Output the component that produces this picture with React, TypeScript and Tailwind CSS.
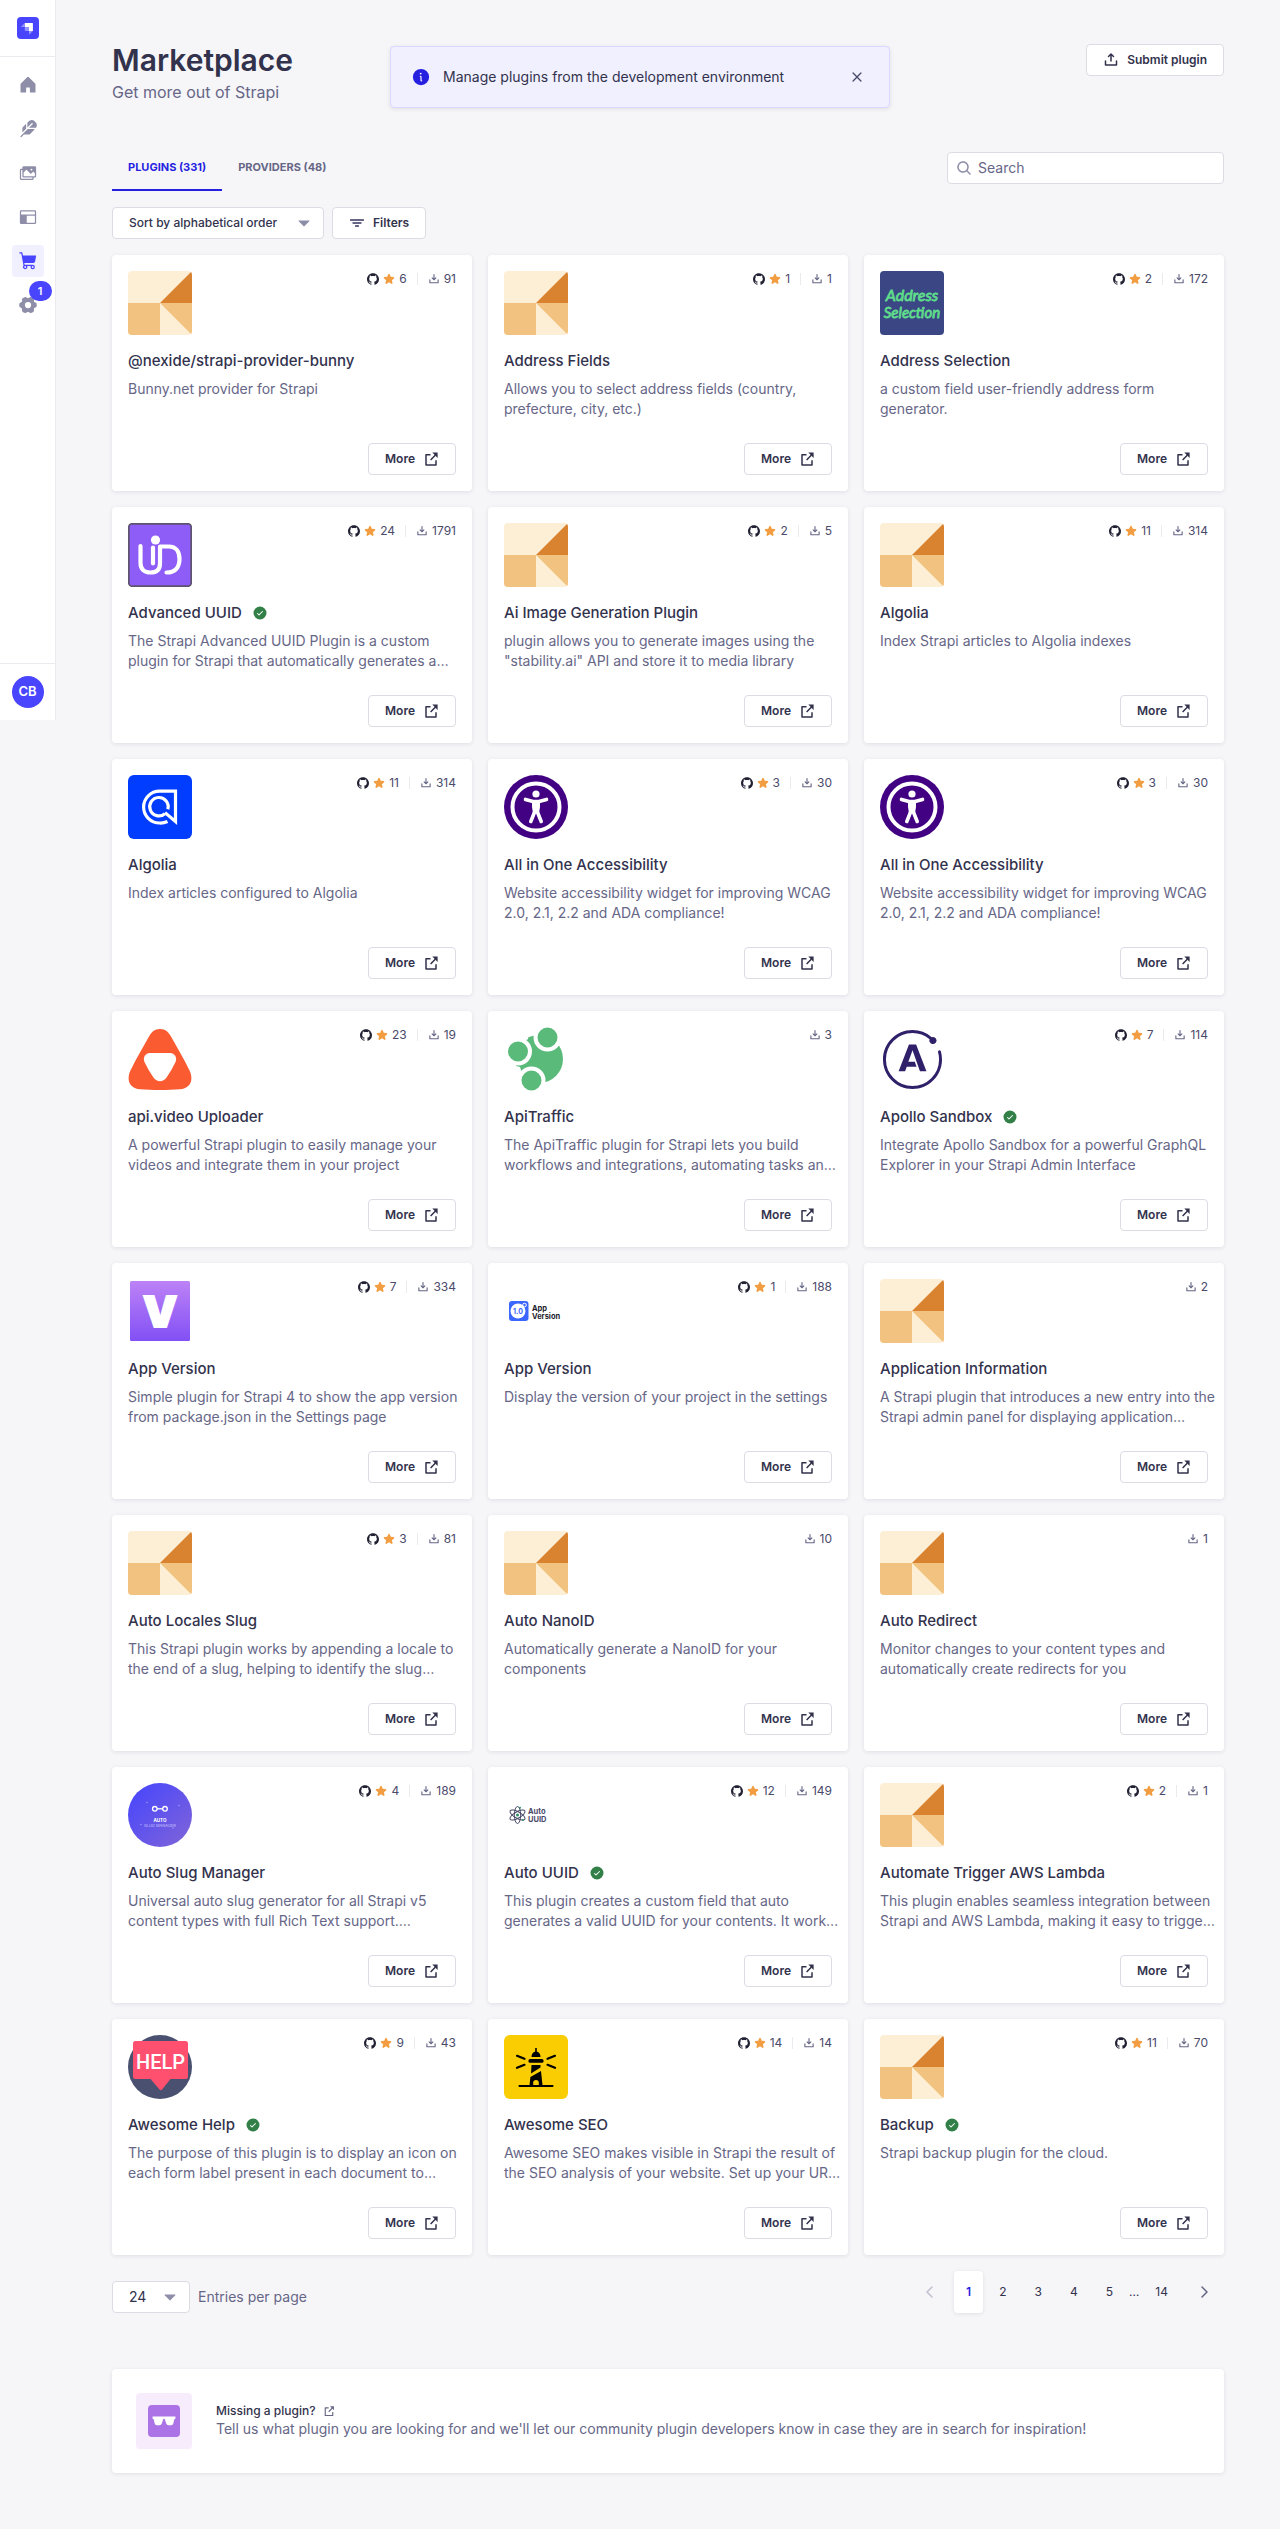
import type { ReactNode } from "react";
import {
  PiCaretDownFill,
  PiCaretLeftBold,
  PiCaretRightBold,
  PiCheckCircleFill,
  PiDownloadSimpleBold,
  PiFeatherFill,
  PiGearSixFill,
  PiHouseFill,
  PiImagesFill,
  PiInfoFill,
  PiLayoutFill,
  PiMagnifyingGlassBold,
  PiShoppingCartFill,
  PiStarFill,
  PiUploadSimpleBold,
  PiXBold,
} from "react-icons/pi";
import { SiApollographql, SiGithub } from "react-icons/si";

/* ---------- small icons ---------- */

function ExternalLinkIcon({ className }: { className: string }) {
  return (
    <svg viewBox="0 0 16 16" fill="none" className={className} aria-hidden="true">
      <path d="M7.5 3.8H3V14h10V9.2" stroke="currentColor" strokeWidth="1.5" strokeLinejoin="round" />
      <path d="M7.6 9 13 3.4" stroke="currentColor" strokeWidth="1.5" />
      <path d="M9.3 1.6h5.3v5.3z" fill="currentColor" />
    </svg>
  );
}

function FilterIcon() {
  return (
    <svg viewBox="0 0 16 16" className="size-4 text-[#666687]" fill="currentColor" aria-hidden="true">
      <rect x="1" y="4" width="14" height="2" rx="0.5" />
      <rect x="3.5" y="7" width="9" height="2" rx="0.5" />
      <rect x="6" y="10" width="4" height="2" rx="0.5" />
    </svg>
  );
}

function SunglassesIcon() {
  return (
    <svg viewBox="0 0 24 12" className="w-6 text-white" fill="currentColor" aria-hidden="true">
      <path d="M.6 1.500h22.800v2.200l-1.100.5-1 4.300a2.200 2.200 0 0 1-2.200 1.700h-2.700a2.400 2.400 0 0 1-2.200-1.600L13 4.700a1 1 0 0 0-2 0L9.800 8.600a2.400 2.400 0 0 1-2.200 1.600H4.900a2.200 2.200 0 0 1-2.200-1.700l-1-4.300-1.100-.5z" />
    </svg>
  );
}

function StrapiMark() {
  return (
    <svg viewBox="0 0 22 22" className="size-[22px]" role="img" aria-label="Strapi">
      <rect width="22" height="22" rx="4" fill="#4945FF" />
      <path d="M7.8 6h7.600c.3 0 .5.200.5.500V14h-3.900v-3.600c0-.3-.2-.5-.5-.5H7.800z" fill="#fff" />
      <path d="M7.800 6v3.900H4.400c-.3 0-.4-.3-.2-.5zM12 14h3.900l-3.600 3.600c-.1.100-.3 0-.3-.1z" fill="#9593FF" />
      <path d="M7.800 9.900h3.700c.3 0 .5.200.5.500V14H8.300c-.3 0-.5-.2-.5-.5z" fill="#9593FF" />
    </svg>
  );
}

/* ---------- plugin logos ---------- */

function DefaultLogo() {
  return (
    <svg viewBox="0 0 64 64" className="size-16 rounded" aria-hidden="true">
      <rect width="64" height="64" fill="#FDEFD5" />
      <rect y="32" width="32" height="32" fill="#F2C380" />
      <path d="M32 32 64 0v32z" fill="#D9822F" />
      <path d="M32 32h32v32z" fill="#F2C380" />
    </svg>
  );
}

function AddressLogo() {
  return (
    <svg viewBox="0 0 64 64" className="size-16 rounded" aria-hidden="true">
      <rect width="64" height="64" fill="#3B4785" />
      <g fill="#5FDD8B" stroke="#5FDD8B" strokeWidth="0.8" strokeLinejoin="round" fontFamily="Lato, sans-serif" fontStyle="italic" textAnchor="middle">
        <text x="32" y="30" fontSize="16">Address</text>
        <text x="32" y="47" fontSize="15">Selection</text>
      </g>
    </svg>
  );
}

function UuidLogo() {
  return (
    <svg viewBox="0 0 64 64" className="size-16 rounded" aria-hidden="true">
      <rect x="0.8" y="0.8" width="62.4" height="62.4" rx="3" fill="#8E5CF7" stroke="#5D5470" strokeWidth="1.8" />
      <g fill="none" stroke="#fff" strokeWidth="4.2" strokeLinecap="round" strokeLinejoin="round">
        <path d="M12.500 23v17c0 6 3.500 9.500 10 9.500s9.500-3.500 9.500-9V23.500h9c7 0 10.500 5 10.500 12.500 0 8-4 13.500-13 13.500" />
        <path d="M25 24.500v16" />
      </g>
      <circle cx="27.500" cy="17" r="4.600" fill="#fff" />
    </svg>
  );
}

function AlgoliaLogo() {
  return (
    <svg viewBox="0 0 64 64" className="size-16 rounded-md" aria-hidden="true">
      <rect width="64" height="64" fill="#003DFF" />
      <g fill="none" stroke="#fff" strokeWidth="3.2">
        <path d="M39.500 46.500a17 17 0 0 1-8 1.500 15.800 15.800 0 1 1 0-31.800h16v30.300L37 37.600" />
        <path d="M39.800 34.200a9.200 9.200 0 1 0-2.900 4.500" />
      </g>
    </svg>
  );
}

function AccessibilityLogo() {
  return (
    <svg viewBox="0 0 64 64" className="size-16" aria-hidden="true">
      <circle cx="32" cy="32" r="32" fill="#420083" />
      <circle cx="32" cy="32" r="23.5" fill="none" stroke="#fff" strokeWidth="4" />
      <circle cx="32" cy="19" r="3.6" fill="#fff" />
      <g fill="none" stroke="#fff" strokeLinecap="round" strokeLinejoin="round" strokeWidth="3.6">
        <path d="M21.500 24.400 29 26.500h6l7.500-2.100" />
        <path d="M26.800 46.500 31 36h2l4.200 10.500" />
      </g>
      <path d="M28 26h8v6l-1 6h-6l-1-6z" fill="#fff" />
    </svg>
  );
}

function ApiVideoLogo() {
  return (
    <svg viewBox="0 0 64 64" className="size-16" aria-hidden="true">
      <path d="M32 2c5.500 0 8.500 3 11 7.500 6 11 13 22 18.500 34 5 11-.5 18-9.500 18.800-12 .9-28 .9-40 0C3 61.500-2.500 54.500 2.500 43.500 8 31.500 15 20.500 21 9.500 23.500 5 26.500 2 32 2z" fill="#FA5B30" />
      <path d="M22 26h20c4.500 0 7.500 4.500 5.500 9-2.500 5.500-6 11-9 15.500-3.500 5-9.500 5-13 0-3-4.500-6.500-10-9-15.500-2-4.500 1-9 5.500-9z" fill="#fff" />
    </svg>
  );
}

function ApiTrafficLogo() {
  return (
    <svg viewBox="0 0 64 64" className="size-16" aria-hidden="true">
      <circle cx="35" cy="32" r="24" fill="#5ABA7A" />
      <path d="M0 64h24L16 40 0 36zM0 0v30L24 12V0z" fill="#fff" />
      <g fill="#5ABA7A" stroke="#fff" strokeWidth="4">
        <circle cx="43.5" cy="10.5" r="12" />
        <circle cx="14" cy="24.5" r="12" />
        <circle cx="27.5" cy="53.5" r="12" />
      </g>
    </svg>
  );
}

function ApolloLogo() {
  return (
    <span className="flex size-16 items-center justify-center">
      <SiApollographql className="size-[59px] text-[#2F2069]" aria-hidden="true" />
    </span>
  );
}

function VersionLogo() {
  return (
    <svg viewBox="0 0 64 64" className="size-16" aria-hidden="true">
      <defs>
        <linearGradient id="version-gradient" x1="0" y1="0" x2="0" y2="1">
          <stop offset="0" stopColor="#BD82F6" />
          <stop offset="1" stopColor="#8250F5" />
        </linearGradient>
      </defs>
      <rect x="2" y="2" width="60" height="60" rx="1.5" fill="url(#version-gradient)" />
      <text x="32" y="48" textAnchor="middle" fill="#fff" stroke="#fff" strokeWidth="2" fontFamily="Inter, sans-serif" fontWeight="900" fontSize="43">V</text>
    </svg>
  );
}

function AppVersionLogo() {
  return (
    <svg viewBox="0 0 64 64" className="size-16" aria-hidden="true">
      <rect x="5" y="22" width="19.5" height="20" rx="3" fill="#3B66FF" />
      <circle cx="14" cy="32" r="7.5" fill="#fff" />
      <circle cx="20.5" cy="26" r="1.8" fill="none" stroke="#fff" />
      <g fontFamily="Inter, sans-serif" fontWeight="700">
        <text x="14" y="34.5" textAnchor="middle" fill="#3B66FF" fontSize="7">1.0</text>
        <text x="28" y="31.5" fill="#1B1B2B" fontSize="7.5">App</text>
        <text x="28" y="39.5" fill="#1B1B2B" fontSize="7.5">Version</text>
      </g>
    </svg>
  );
}

function SlugLogo() {
  return (
    <svg viewBox="0 0 64 64" className="size-16" aria-hidden="true">
      <defs>
        <linearGradient id="slug-gradient" x1="0.1" y1="0.1" x2="0.9" y2="0.9">
          <stop offset="0" stopColor="#4B48FB" />
          <stop offset="1" stopColor="#7B62DB" />
        </linearGradient>
      </defs>
      <circle cx="32" cy="32" r="32" fill="url(#slug-gradient)" />
      <g fill="none" stroke="#fff" strokeWidth="1.3">
        <circle cx="26.8" cy="25.8" r="2.3" />
        <circle cx="37" cy="25.8" r="2.3" />
        <path d="M29 25.800h6" />
      </g>
      <g fill="#A9A5FA">
        <circle cx="19" cy="19.5" r="0.7" />
        <circle cx="51" cy="22.5" r="0.7" />
        <circle cx="13" cy="41.5" r="0.7" />
        <circle cx="45" cy="45" r="0.7" />
      </g>
      <g textAnchor="middle" fontFamily="Inter, sans-serif">
        <text x="32" y="38.5" fill="#fff" fontWeight="700" fontSize="4.5">AUTO</text>
        <text x="32" y="43.5" fill="#C9C4FF" fontSize="4">SLUG MANAGER</text>
      </g>
    </svg>
  );
}

function AutoUuidLogo() {
  return (
    <svg viewBox="0 0 64 64" className="size-16" aria-hidden="true">
      <g fill="none" stroke="#4A4A6A" strokeWidth="1">
        <ellipse cx="13.5" cy="32" rx="3.2" ry="8.5" />
        <ellipse cx="13.5" cy="32" rx="3.2" ry="8.5" transform="rotate(60 13.5 32)" />
        <ellipse cx="13.5" cy="32" rx="3.2" ry="8.5" transform="rotate(120 13.5 32)" />
      </g>
      <circle cx="13.5" cy="32" r="1.5" fill="#2F8F6B" />
      <circle cx="16" cy="24.8" r="1" fill="#2F8F6B" />
      <circle cx="19" cy="37" r="1" fill="#2F8F6B" />
      <g fontFamily="Inter, sans-serif" fontWeight="700" fontSize="7.5" fill="#4A4A6A">
        <text x="24" y="31.300">Auto</text>
        <text x="24" y="38.500">UUID</text>
      </g>
    </svg>
  );
}

function HelpLogo() {
  return (
    <svg viewBox="0 0 64 64" className="size-16" aria-hidden="true">
      <circle cx="32" cy="32" r="32" fill="#495070" />
      <path d="M7.500 6h50a2.500 2.500 0 0 1 2.500 2.500v33a2.500 2.500 0 0 1-2.500 2.500H42.500L34.300 54.300a2 2 0 0 1-3 0L22.500 44h-15A2.500 2.500 0 0 1 5 41.500v-33A2.500 2.500 0 0 1 7.500 6z" fill="#FF5070" />
      <text x="32.500" y="33.500" textAnchor="middle" fill="#fff" fontFamily="Roboto, sans-serif" fontWeight="500" fontSize="20">HELP</text>
    </svg>
  );
}

function LighthouseLogo() {
  return (
    <svg viewBox="0 0 64 64" className="size-16 rounded-md" aria-hidden="true">
      <rect width="64" height="64" fill="#FACD02" />
      <g fill="#000">
        <path d="M31.200 13h1.600v3.400c2.400.7 3.700 2.700 3.700 5.600h-9c0-2.900 1.300-4.900 3.700-5.600z" />
        <rect x="24.5" y="24" width="15" height="3.8" rx="1.5" />
        <path d="M27.500 30h9v2.500l-9.500 6zM37 36l1.600 15H34.800v-3.300a2.800 2.800 0 0 0-5.600 0V51h-3.800l1-9z" />
        <rect x="14.5" y="50" width="35" height="2" rx="0.8" />
      </g>
      <g stroke="#000" strokeWidth="2.2" strokeLinecap="round">
        <path d="m13 20.800 7.500 3M13 32.800l7.500-3M51 20.800l-7.500 3M51 32.800l-7.500-3" />
      </g>
    </svg>
  );
}

/* ---------- data ---------- */

type Plugin = {
  name: string;
  text: string;
  logo?: () => ReactNode;
  stars?: number;
  downloads: number;
  verified?: boolean;
};

const plugins: Plugin[] = [
  { name: "@nexide/strapi-provider-bunny", text: "Bunny.net provider for Strapi", stars: 6, downloads: 91 },
  { name: "Address Fields", text: "Allows you to select address fields (country,\nprefecture, city, etc.)", stars: 1, downloads: 1 },
  { name: "Address Selection", text: "a custom field user-friendly address form\ngenerator.", logo: AddressLogo, stars: 2, downloads: 172 },
  { name: "Advanced UUID", text: "The Strapi Advanced UUID Plugin is a custom\nplugin for Strapi that automatically generates a…", logo: UuidLogo, stars: 24, downloads: 1791, verified: true },
  { name: "Ai Image Generation Plugin", text: "plugin allows you to generate images using the\n\"stability.ai\" API and store it to media library", stars: 2, downloads: 5 },
  { name: "Algolia", text: "Index Strapi articles to Algolia indexes", stars: 11, downloads: 314 },
  { name: "Algolia", text: "Index articles configured to Algolia", logo: AlgoliaLogo, stars: 11, downloads: 314 },
  { name: "All in One Accessibility", text: "Website accessibility widget for improving WCAG\n2.0, 2.1, 2.2 and ADA compliance!", logo: AccessibilityLogo, stars: 3, downloads: 30 },
  { name: "All in One Accessibility", text: "Website accessibility widget for improving WCAG\n2.0, 2.1, 2.2 and ADA compliance!", logo: AccessibilityLogo, stars: 3, downloads: 30 },
  { name: "api.video Uploader", text: "A powerful Strapi plugin to easily manage your\nvideos and integrate them in your project", logo: ApiVideoLogo, stars: 23, downloads: 19 },
  { name: "ApiTraffic", text: "The ApiTraffic plugin for Strapi lets you build\nworkflows and integrations, automating tasks an…", logo: ApiTrafficLogo, downloads: 3 },
  { name: "Apollo Sandbox", text: "Integrate Apollo Sandbox for a powerful GraphQL\nExplorer in your Strapi Admin Interface", logo: ApolloLogo, stars: 7, downloads: 114, verified: true },
  { name: "App Version", text: "Simple plugin for Strapi 4 to show the app version\nfrom package.json in the Settings page", logo: VersionLogo, stars: 7, downloads: 334 },
  { name: "App Version", text: "Display the version of your project in the settings", logo: AppVersionLogo, stars: 1, downloads: 188 },
  { name: "Application Information", text: "A Strapi plugin that introduces a new entry into the\nStrapi admin panel for displaying application…", downloads: 2 },
  { name: "Auto Locales Slug", text: "This Strapi plugin works by appending a locale to\nthe end of a slug, helping to identify the slug…", stars: 3, downloads: 81 },
  { name: "Auto NanoID", text: "Automatically generate a NanoID for your\ncomponents", downloads: 10 },
  { name: "Auto Redirect", text: "Monitor changes to your content types and\nautomatically create redirects for you", downloads: 1 },
  { name: "Auto Slug Manager", text: "Universal auto slug generator for all Strapi v5\ncontent types with full Rich Text support.…", logo: SlugLogo, stars: 4, downloads: 189 },
  { name: "Auto UUID", text: "This plugin creates a custom field that auto\ngenerates a valid UUID for your contents. It work…", logo: AutoUuidLogo, stars: 12, downloads: 149, verified: true },
  { name: "Automate Trigger AWS Lambda", text: "This plugin enables seamless integration between\nStrapi and AWS Lambda, making it easy to trigge…", stars: 2, downloads: 1 },
  { name: "Awesome Help", text: "The purpose of this plugin is to display an icon on\neach form label present in each document to…", logo: HelpLogo, stars: 9, downloads: 43, verified: true },
  { name: "Awesome SEO", text: "Awesome SEO makes visible in Strapi the result of\nthe SEO analysis of your website. Set up your UR…", logo: LighthouseLogo, stars: 14, downloads: 14 },
  { name: "Backup", text: "Strapi backup plugin for the cloud.", stars: 11, downloads: 70, verified: true },
];

const navItems = [
  { label: "Home", Icon: PiHouseFill },
  { label: "Content Manager", Icon: PiFeatherFill },
  { label: "Media Library", Icon: PiImagesFill },
  { label: "Content-Type Builder", Icon: PiLayoutFill },
  { label: "Marketplace", Icon: PiShoppingCartFill, active: true },
  { label: "Settings", Icon: PiGearSixFill, badge: 1 },
];

/* ---------- page parts ---------- */

function Sidebar() {
  return (
    <aside className="flex h-[720px] w-14 shrink-0 flex-col border-r border-[#EAEAEF] bg-white">
      <div className="flex h-14 items-center justify-center">
        <StrapiMark />
      </div>
      <nav aria-label="Main" className="flex flex-1 flex-col items-center gap-3 border-t border-[#EAEAEF] pt-3">
        {navItems.map(({ label, Icon, active, badge }) => (
          <a
            key={label}
            href="#"
            aria-label={label}
            className={
              active
                ? "relative flex size-8 items-center justify-center rounded bg-[#F0F0FF] text-[#4945FF]"
                : "relative flex size-8 items-center justify-center rounded text-[#8E8EA9]"
            }
          >
            <Icon className="size-5" aria-hidden="true" />
            {badge && (
              <span className="absolute -top-2 left-[17px] flex h-5 w-[23px] items-center justify-center rounded-full bg-[#4945FF] text-[11px] leading-4 font-semibold text-white">
                {badge}
              </span>
            )}
          </a>
        ))}
      </nav>
      <div className="flex h-[57px] items-center justify-center border-t border-[#EAEAEF]">
        <button type="button" aria-label="Account" className="flex size-8 items-center justify-center rounded-full bg-[#4945FF] text-[13px] font-semibold text-white">
          CB
        </button>
      </div>
    </aside>
  );
}

function PluginCard({ plugin }: { plugin: Plugin }) {
  const Logo = plugin.logo ?? DefaultLogo;
  return (
    <article className="flex min-h-[236px] flex-col rounded bg-white p-4 shadow-[0_1px_4px_rgba(33,33,52,0.1)]">
      <div className="flex items-start justify-between">
        <Logo />
        <div className="flex h-4 items-center gap-[10px] text-xs text-[#4A4A6A]">
          {plugin.stars !== undefined && (
            <>
              <span className="flex items-center gap-1">
                <SiGithub className="size-3 text-[#212134]" aria-hidden="true" />
                <PiStarFill className="size-3 text-[#F29D41]" aria-hidden="true" />
                {plugin.stars}
              </span>
              <span className="h-3 w-px bg-[#EAEAEF]" />
            </>
          )}
          <span className="flex items-center gap-1">
            <PiDownloadSimpleBold className="size-3 text-[#666687]" aria-hidden="true" />
            {plugin.downloads}
          </span>
        </div>
      </div>
      <h2 className="mt-4 flex items-center gap-[10px] text-[15px] leading-5 font-medium text-[#32324D]">
        {plugin.name}
        {plugin.verified && <PiCheckCircleFill className="size-4 text-[#328048]" role="img" aria-label="Verified" />}
      </h2>
      <p className="mt-2 text-sm leading-5 whitespace-pre text-[#666687]">{plugin.text}</p>
      <a href="#" aria-label={`More about ${plugin.name}`} className="mt-auto flex h-8 items-center gap-2 self-end rounded border border-[#DCDCE4] px-4 text-xs font-semibold text-[#32324D]">
        More
        <ExternalLinkIcon className="size-4" />
      </a>
    </article>
  );
}

export default function App() {
  return (
    <div className="flex items-start bg-[#F6F6F9] font-[Inter,sans-serif] text-[#32324D]">
      <Sidebar />
      <main className="min-w-0 flex-1 px-14 pb-14">
        <div role="status" className="absolute top-[46px] left-1/2 flex h-[62px] w-[500px] -translate-x-1/2 items-center gap-3 rounded border border-[#D9D8FF] bg-[#F0F0FF] px-5 shadow-[0_1px_4px_rgba(33,33,52,0.1)]">
          <PiInfoFill className="size-5 text-[#271FE0]" aria-hidden="true" />
          <p className="flex-1 text-sm">Manage plugins from the development environment</p>
          <button type="button" aria-label="Close" className="flex size-6 items-center justify-center text-[#4A4A6A]">
            <PiXBold className="size-[14px]" aria-hidden="true" />
          </button>
        </div>

        <header className="pt-10">
          <div className="flex items-center justify-between">
            <h1 className="text-3xl leading-10 font-semibold">Marketplace</h1>
            <a href="#" className="flex h-8 items-center gap-2 rounded border border-[#DCDCE4] bg-white px-4 text-xs font-semibold">
              <PiUploadSimpleBold className="size-4" aria-hidden="true" />
              Submit plugin
            </a>
          </div>
          <p className="text-base leading-6 text-[#666687]">Get more out of Strapi</p>
        </header>

        <div className="mt-10 flex items-center justify-between">
          <div role="tablist" aria-label="Marketplace content" className="flex h-[47px] text-[11px] leading-4 font-bold">
            <button type="button" role="tab" aria-selected="true" className="border-b-2 border-[#271FE0] px-4 text-[#271FE0]">
              PLUGINS (331)
            </button>
            <button type="button" role="tab" aria-selected="false" className="border-b-2 border-transparent px-4 text-[#666687]">
              PROVIDERS (48)
            </button>
          </div>
          <label className="flex h-8 w-[277px] items-center gap-[6px] rounded border border-[#DCDCE4] bg-white px-2">
            <PiMagnifyingGlassBold className="size-4 text-[#8E8EA9]" aria-hidden="true" />
            <input type="search" aria-label="Search plugins" placeholder="Search" className="min-w-0 flex-1 text-sm outline-none placeholder:text-[#666687]" />
          </label>
        </div>

        <div className="mt-4 flex gap-2">
          <div className="relative">
            <select aria-label="Sort by" className="h-8 w-[212px] appearance-none rounded border border-[#DCDCE4] bg-white pr-8 pl-4 text-xs font-medium">
              <option>Sort by alphabetical order</option>
              <option>Sort by newest</option>
            </select>
            <PiCaretDownFill className="pointer-events-none absolute top-2 right-3 size-4 text-[#8E8EA9]" aria-hidden="true" />
          </div>
          <button type="button" className="flex h-8 items-center gap-2 rounded border border-[#DCDCE4] bg-white px-4 text-xs font-semibold">
            <FilterIcon />
            Filters
          </button>
        </div>

        <section aria-label="Plugins" className="mt-4 grid grid-cols-3 gap-4">
          {plugins.map((plugin, index) => (
            <PluginCard key={index} plugin={plugin} />
          ))}
        </section>

        <div className="mt-4 flex items-end justify-between">
          <label className="flex items-center gap-2 text-sm text-[#666687]">
            <span className="relative">
              <select className="block h-8 w-[78px] appearance-none rounded border border-[#DCDCE4] bg-white pl-4 text-sm text-[#32324D]">
                <option>24</option>
                <option>48</option>
              </select>
              <PiCaretDownFill className="pointer-events-none absolute top-2 right-3 size-4 text-[#8E8EA9]" aria-hidden="true" />
            </span>
            Entries per page
          </label>
          <nav aria-label="Pagination" className="flex h-[42px] items-center gap-1 text-xs text-[#32324D]">
            <a href="#" aria-label="Previous page" className="px-3 text-[#C0C0CF]">
              <PiCaretLeftBold className="size-4" aria-hidden="true" />
            </a>
            <a href="#" aria-current="page" className="flex h-full items-center rounded bg-white px-3 font-semibold text-[#271FE0] shadow-[0_1px_4px_rgba(33,33,52,0.1)]">
              1
            </a>
            <a href="#" className="px-3">2</a>
            <a href="#" className="px-3">3</a>
            <a href="#" className="px-3">4</a>
            <a href="#" className="px-3">5</a>
            <span>…</span>
            <a href="#" className="px-3">14</a>
            <a href="#" aria-label="Next page" className="px-3 text-[#666687]">
              <PiCaretRightBold className="size-4" aria-hidden="true" />
            </a>
          </nav>
        </div>

        <section className="mt-14 flex items-center gap-6 rounded bg-white p-6 shadow-[0_1px_4px_rgba(33,33,52,0.1)]">
          <span className="flex size-14 items-center justify-center rounded bg-[#F6ECFC]">
            <span className="flex size-8 items-center justify-center rounded bg-[#AC73E6]">
              <SunglassesIcon />
            </span>
          </span>
          <div>
            <h2 className="text-xs leading-4 font-medium">
              <a href="#" className="flex items-center gap-2">
                Missing a plugin?
                <ExternalLinkIcon className="size-3 text-[#666687]" />
              </a>
            </h2>
            <p className="text-sm leading-5 text-[#666687]">
              Tell us what plugin you are looking for and we'll let our community plugin developers know in case they are in search for inspiration!
            </p>
          </div>
        </section>
      </main>
    </div>
  );
}
